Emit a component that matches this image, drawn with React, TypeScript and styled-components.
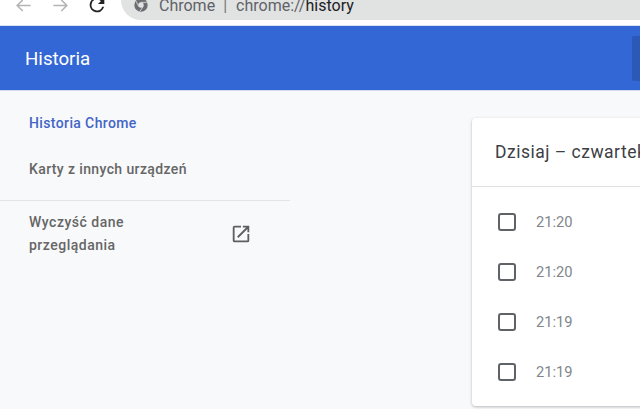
import { createGlobalStyle } from "styled-components";
import styled from "styled-components";

const GlobalStyle = createGlobalStyle`
  html, body {
    margin: 0;
    padding: 0;
    background: #f8f9fa;
    font-family: Roboto, "Liberation Sans", sans-serif;
    overflow: hidden;
  }
`;

const Page = styled.div`
  width: 640px;
  height: 409px;
  display: flex;
  flex-direction: column;
  overflow: hidden;
`;

const Toolbar = styled.div`
  height: 24px;
  flex: none;
  background: #ffffff;
  display: flex;
  align-items: flex-end;
  overflow: hidden;
  padding-bottom: 1px;
`;

const NavButton = styled.div<{ $left: number }>`
  width: 22px;
  height: 22px;
  flex: none;
  margin-left: ${(props) => props.$left}px;
  margin-bottom: 8px;
  display: flex;
  align-items: center;
  justify-content: center;
`;

const Omnibox = styled.div`
  flex: 1;
  height: 40px;
  margin-left: 13px;
  margin-bottom: 4px;
  background: #e1e2e2;
  border-radius: 20px 0 0 20px;
  display: flex;
  align-items: flex-end;
  padding: 0 0 0 13px;
  color: #5f6368;
  font-size: 16px;
  line-height: 28px;
  white-space: nowrap;
`;

const OmniText = styled.span`
  margin-left: 11px;
`;

const Pipe = styled.span`
  margin: 0 9px 0 8px;
  color: #777;
`;

const Strong = styled.span`
  color: #202124;
`;

const SecureIcon = styled.svg`
  width: 14px;
  height: 14px;
  margin-bottom: 8px;
`;

const Header = styled.header`
  height: 64px;
  flex: none;
  background: #3367d6;
  border-top: 1px solid #d9e3f7;
  border-bottom: 1px solid #d3def4;
  display: flex;
  align-items: center;
  justify-content: space-between;
  padding-left: 25px;
`;

const Title = styled.h1`
  margin: 1px 0 0;
  color: #ffffff;
  font-size: 18.7px;
  font-weight: 400;
`;

const SearchBox = styled.div`
  width: 8px;
  height: 45px;
  background: #2c58b8;
  border-radius: 2px 0 0 2px;
`;

const Main = styled.div`
  flex: 1;
  display: flex;
  min-height: 0;
`;

const Sidebar = styled.nav`
  width: 290px;
  flex: none;
  padding-top: 9px;
  box-sizing: border-box;
`;

const MenuItem = styled.div<{ $active?: boolean }>`
  height: 46px;
  padding-left: 29px;
  display: flex;
  align-items: center;
  font-size: 14px;
  font-weight: 500;
  letter-spacing: 0.38px;
  color: ${(props) => (props.$active ? "#4366c6" : "#666666")};
`;

const Divider = styled.div`
  height: 1px;
  background: #e3e4e6;
  margin-top: 8px;
`;

const ClearRow = styled.div`
  display: flex;
  align-items: center;
  justify-content: space-between;
  padding: 10px 38px 0 29px;
  font-size: 14px;
  font-weight: 500;
  letter-spacing: 0.5px;
  line-height: 23px;
  color: #666666;
`;

const Card = styled.section`
  width: 200px;
  margin: 27px 0 0 182px;
  height: 288px;
  background: #ffffff;
  border-radius: 4px 0 0 4px;
  box-shadow: 0 1px 3px rgba(60, 64, 67, 0.35);
  flex: none;
`;

const CardHeader = styled.div`
  height: 68px;
  padding-left: 23px;
  display: flex;
  align-items: center;
  font-size: 17.5px;
  letter-spacing: 0.5px;
  white-space: nowrap;
  overflow: hidden;
  color: #3c4043;
  border-bottom: 1px solid #dfe1e5;
`;

const Rows = styled.div`
  padding-top: 10px;
`;

const Row = styled.div`
  height: 50px;
  display: flex;
  align-items: center;
  padding-left: 26px;
`;

const Check = styled.span`
  width: 14px;
  height: 14px;
  border: 2px solid #5f6368;
  border-radius: 3px;
  flex: none;
`;

const Time = styled.span`
  margin-left: 20px;
  font-size: 14.7px;
  color: #80868b;
`;

const times = ["21:20", "21:20", "21:19", "21:19"];

export default function App() {
  return (
    <Page>
      <GlobalStyle />
      <Toolbar>
        <NavButton $left={12}>
          <svg width="19" height="19" viewBox="0 0 24 24" fill="none" stroke="#b4b4b4" strokeWidth="2">
            <path d="M21 12H4M11 5l-7 7 7 7" />
          </svg>
        </NavButton>
        <NavButton $left={15}>
          <svg width="19" height="19" viewBox="0 0 24 24" fill="none" stroke="#b4b4b4" strokeWidth="2">
            <path d="M3 12h17M13 5l7 7-7 7" />
          </svg>
        </NavButton>
        <NavButton $left={15}>
          <svg width="22" height="22" viewBox="0 0 24 24" fill="#222">
            <path d="M17.65 6.35A7.96 7.96 0 0 0 12 4a8 8 0 1 0 7.73 10h-2.08A6 6 0 1 1 12 6c1.66 0 3.14.69 4.22 1.78L13 11h7V4l-2.35 2.35z" />
          </svg>
        </NavButton>
        <Omnibox>
          <SecureIcon viewBox="0 0 24 24">
            <circle cx="12" cy="12" r="11.5" fill="#6b6d70" />
            <circle cx="12" cy="12" r="4.6" fill="#e1e2e2" />
            <path d="M12 7.4h10M8 14.5 3 4.5M15.8 14.5 10 23" stroke="#e1e2e2" strokeWidth="1.4" />
          </SecureIcon>
          <OmniText>
            Chrome
            <Pipe>|</Pipe>
            chrome://<Strong>history</Strong>
          </OmniText>
        </Omnibox>
      </Toolbar>
      <Header>
        <Title>Historia</Title>
        <SearchBox />
      </Header>
      <Main>
        <Sidebar>
          <MenuItem $active>Historia Chrome</MenuItem>
          <MenuItem>Karty z innych urządzeń</MenuItem>
          <Divider />
          <ClearRow>
            <span>
              Wyczyść dane
              <br />
              przeglądania
            </span>
            <svg width="22" height="22" viewBox="0 0 24 24" fill="#5f5f5f">
              <path d="M19 19H5V5h7V3H5a2 2 0 0 0-2 2v14a2 2 0 0 0 2 2h14a2 2 0 0 0 2-2v-7h-2v7zM14 3v2h3.59l-9.83 9.83 1.41 1.41L19 6.41V10h2V3h-7z" />
            </svg>
          </ClearRow>
        </Sidebar>
        <Card>
          <CardHeader>Dzisiaj – czwartek</CardHeader>
          <Rows>
            {times.map((time, i) => (
              <Row key={i}>
                <Check />
                <Time>{time}</Time>
              </Row>
            ))}
          </Rows>
        </Card>
      </Main>
    </Page>
  );
}
